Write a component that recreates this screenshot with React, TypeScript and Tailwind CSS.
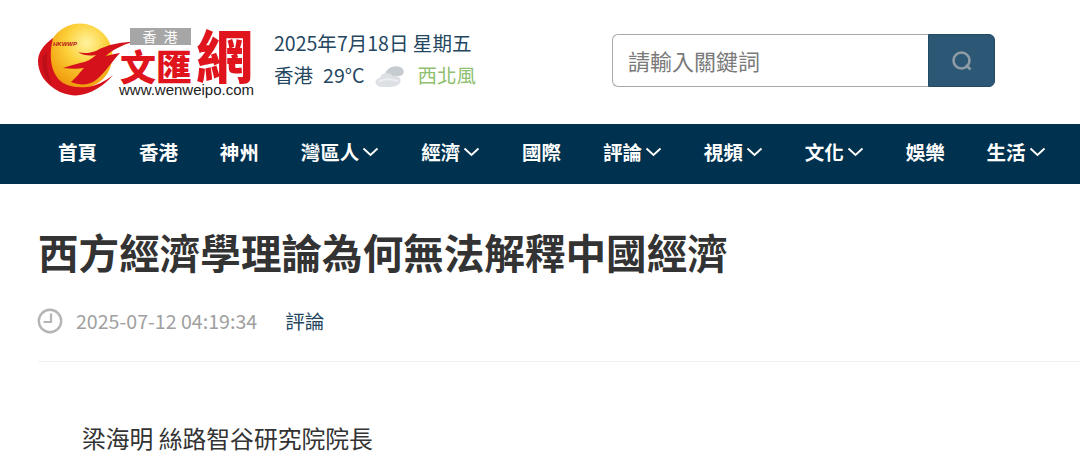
import React from "react";

const font = { fontFamily: '"Noto Sans CJK TC", "Noto Sans", sans-serif' };

function Chevron() {
  return (
    <svg width="17" height="10" viewBox="0 0 17 10" fill="none" className="ml-[3px]">
      <path d="M1.5 1.5 L8.5 8 L15.5 1.5" stroke="#ffffff" strokeWidth="1.9" />
    </svg>
  );
}

function Logo() {
  return (
    <div className="relative w-[222px] h-[80px] ml-[34px] mt-[22px] shrink-0">
      <svg width="222" height="80" viewBox="0 0 222 80" className="absolute left-0 top-0">
        <defs>
          <radialGradient id="ball" cx="0.6" cy="0.3" r="0.78">
            <stop offset="0" stopColor="#fff3a0" />
            <stop offset="0.4" stopColor="#fcd23c" />
            <stop offset="0.8" stopColor="#f3a512" />
            <stop offset="1" stopColor="#ea8d10" />
          </radialGradient>
        </defs>
        <circle cx="46" cy="34" r="32.5" fill="url(#ball)" />
        <path d="M19 16 C9 23 4 31 4 39 C4 50 10 62 26 70 C34 73 40 74 46 73 C56 72 70 64 79 53 C70 60 62 64 53 65 C44 66 36 65 29 61 C20 55 13 40 19 16 Z" fill="#d5121b" />
        <path d="M99 20 C88 20 74 22 62 29 C56 31 50 32 44 30 C50 34 56 34 62 33 C58 37 52 40 46 41 C40 43 34 44 29 46 C36 47 44 47 50 46 C46 50 44 54 37 60 C46 64 56 63 62 58 C70 52 76 42 86 31 C80 32 76 33 72 34 C78 28 88 23 99 20 Z" fill="#d5121b" />
        <path d="M9 34 C7 44 9 54 18 63 C14 52 12 44 13 30 Z" fill="#a80d14" opacity="0.55" />
        <text x="19" y="24" fontSize="6" fontWeight="800" fontStyle="italic" fill="#b5121b" fontFamily="Liberation Sans, sans-serif">HKWWP</text>
      </svg>
      <span className="absolute left-[96px] top-[6px] w-[61px] h-[17px] bg-[#a6a6a6] text-white text-[14px] leading-[17px] text-center tracking-[7px] pl-[6px]">香港</span>
      <span className="absolute left-[86px] top-[28px] text-[#e0141c] text-[36px] leading-[31px] font-black whitespace-nowrap">文匯</span>
      <span className="absolute left-[162px] top-[3px] text-[#e0141c] text-[57px] leading-[56px] font-black">網</span>
      <span className="absolute left-[85px] top-[60px] text-[#222] text-[15px] leading-[15px] whitespace-nowrap" style={{ fontFamily: '"Liberation Sans", sans-serif' }}>www.wenweipo.com</span>
    </div>
  );
}

function Cloud() {
  return (
    <svg width="32" height="26" viewBox="0 0 32 26">
      <path d="M11 11 C13 4 22 1 28 5 C31 8 30 12 26 13 L13 14 Z" fill="#c6cbd0" />
      <path d="M3 22 C0 20 2 15 6 15 C7 10 15 8 19 13 C24 12 28 15 26 20 C24 23 19 24 15 24 L6 24 Z" fill="#dcdfe3" />
      <path d="M5 19 C10 15 17 16 24 18" stroke="#eceef0" strokeWidth="2" fill="none" />
    </svg>
  );
}

const nav: [string, boolean][] = [
  ["首頁", false],
  ["香港", false],
  ["神州", false],
  ["灣區人", true],
  ["經濟", true],
  ["國際", false],
  ["評論", true],
  ["視頻", true],
  ["文化", true],
  ["娛樂", false],
  ["生活", true],
];

export default function App() {
  return (
    <div className="w-[1080px] h-[467px] overflow-hidden bg-white" style={font}>
      <header className="h-[124px] flex items-start">
        <Logo />
        <div className="ml-[18px] mt-[27px] w-[240px] flex flex-col text-[#24475f] text-[19.55px] leading-[32px]">
          <div className="whitespace-nowrap">2025年7月18日 星期五</div>
          <div className="flex items-center whitespace-nowrap">
            <span>香港</span>
            <span className="ml-[10px]">29°C</span>
            <span className="ml-[10px] mt-[2px]"><Cloud /></span>
            <span className="ml-[11px] text-[#8fc06f]">西北風</span>
          </div>
        </div>
        <div className="ml-[98px] mt-[34px] w-[383px] h-[53px] flex">
          <div className="flex-1 flex items-center pl-[15px] bg-white border border-[#a9a9a9] border-r-0 rounded-l-[6px] text-[#7a7a7a] text-[22px]">
            請輸入關鍵詞
          </div>
          <button className="w-[67px] flex items-center justify-center bg-[#2c5875] rounded-r-[6px] border border-[#244a63]">
            <svg width="24" height="24" viewBox="0 0 24 24" fill="none">
              <circle cx="11.5" cy="11.5" r="8" stroke="#8f9ca6" strokeWidth="2.6" />
              <path d="M16 16 L20.5 20.5" stroke="#8f9ca6" strokeWidth="2.6" />
            </svg>
          </button>
        </div>
      </header>
      <nav className="h-[60px] bg-[#00324f] flex items-center pl-[58px] gap-[41.9px]">
        {nav.map(([t, c]) => (
          <div key={t} className="flex items-center text-white text-[19.5px] leading-[56px] mb-[4px] font-bold whitespace-nowrap">
            <span>{t}</span>
            {c && <Chevron />}
          </div>
        ))}
      </nav>
      <main className="pl-[38px]">
        <h1 className="mt-[38px] text-[40.6px] leading-[60px] font-bold text-[#333333] whitespace-nowrap">
          西方經濟學理論為何無法解釋中國經濟
        </h1>
        <div className="mt-[22px] h-[34px] flex items-center text-[19.6px]">
          <svg width="26" height="26" viewBox="0 0 26 26" fill="none" className="-ml-[1px]">
            <circle cx="13" cy="13" r="11.2" stroke="#b5b5b5" strokeWidth="2.4" />
            <path d="M14 5.5 V14 H6.5" stroke="#b5b5b5" strokeWidth="2.2" />
          </svg>
          <span className="ml-[13px] text-[#a0a0a0]">2025-07-12 04:19:34</span>
          <span className="ml-[28px] text-[#24475f]">評論</span>
        </div>
        <div className="mt-[23px] border-t border-[#f2f2f2]" />
        <p className="mt-[58px] pl-[44px] text-[23.8px] leading-[36px] text-[#333333] whitespace-nowrap">
          梁海明 絲路智谷研究院院長
        </p>
      </main>
    </div>
  );
}
